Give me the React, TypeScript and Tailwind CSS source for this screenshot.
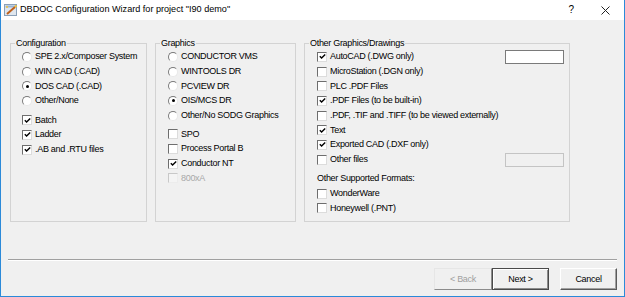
import React from "react";

type Item = { label: string; on?: boolean; disabled?: boolean };

function Radio({ label, on }: Item) {
  return (
    <div className="flex h-[14.67px] items-center">
      <span className="flex h-[10px] w-[10px] shrink-0 items-center justify-center rounded-full border border-t-[#7a7a7a] border-l-[#7a7a7a] border-b-[#e8e8e8] border-r-[#e8e8e8] bg-white">
        {on && <span className="h-[3px] w-[3px] rounded-full bg-black" />}
      </span>
      <span className="ml-[3px] whitespace-nowrap leading-none">{label}</span>
    </div>
  );
}

function Check({ label, on, disabled, children }: Item & { children?: React.ReactNode }) {
  return (
    <div className="flex h-[14.67px] items-center">
      <span
        className={
          disabled
            ? "flex h-[10px] w-[10px] shrink-0 items-center justify-center border border-t-[#c8c8c8] border-l-[#c8c8c8] border-b-[#ececec] border-r-[#ececec] bg-[#f4f4f4]"
            : "flex h-[10px] w-[10px] shrink-0 items-center justify-center border border-t-[#6e6e6e] border-l-[#6e6e6e] border-b-[#dcdcdc] border-r-[#dcdcdc] bg-white"
        }
      >
        {on && (
          <svg width="7" height="7" viewBox="0 0 7 7">
            <path d="M0.8 3.2 L2.6 5 L6.2 1.4" stroke="#000" strokeWidth="1.4" fill="none" />
          </svg>
        )}
      </span>
      <span className={disabled ? "ml-[3px] whitespace-nowrap leading-none text-[#a8a8a8]" : "ml-[3px] whitespace-nowrap leading-none"}>
        {label}
      </span>
      {children}
    </div>
  );
}

function Group({ title, width, pad, children }: { title: string; width: string; pad: string; children: React.ReactNode }) {
  return (
    <fieldset className={`h-[185px] shrink-0 border border-[#d3d3d3] ${width}`}>
      <legend className="ml-[4px] px-[1px] leading-[12px]">{title}</legend>
      <div className={`flex flex-col pt-[0.67px] ${pad}`}>{children}</div>
    </fieldset>
  );
}

function WizardIcon() {
  return (
    <svg width="14" height="14" viewBox="0 0 14 14">
      <rect x="0.5" y="1.5" width="12" height="11" fill="#dfe6ee" stroke="#8aa0b8" />
      <rect x="1.5" y="2.5" width="10" height="2" fill="#9bb6d6" />
      <path d="M3 11 L11 4" stroke="#c0601a" strokeWidth="2" />
      <path d="M11 4 L12.5 2.5" stroke="#f3c33a" strokeWidth="2" />
      <circle cx="3" cy="4" r="1" fill="#f3c33a" />
    </svg>
  );
}

export default function App() {
  return (
    <div className="flex h-[297px] w-[625px] flex-col overflow-hidden border-x border-b border-[#2b8ad9] bg-white font-['Liberation_Sans',Arial,sans-serif] text-black">
      {/* title bar */}
      <div className="flex h-[20px] shrink-0 items-center bg-white pl-[3px]">
        <WizardIcon />
        <span className="ml-[2px] text-[9.1px] leading-none">DBDOC Configuration Wizard for project "I90 demo"</span>
        <span className="ml-auto text-[10px] leading-none">?</span>
        <svg className="ml-[27px] mr-[14px]" width="9" height="9" viewBox="0 0 9 9">
          <path d="M0.5 0.5 L8.5 8.5 M8.5 0.5 L0.5 8.5" stroke="#222" strokeWidth="1" />
        </svg>
      </div>

      {/* body */}
      <div className="flex flex-1 flex-col bg-[#f0f0f0] text-[9px] tracking-[-0.3px]">
        <div className="flex gap-[8px] pl-[9px] pt-[17px]">
          <Group title="Configuration" width="w-[137px]" pad="pl-[11px]">
            <Radio label="SPE 2.x/Composer System" />
            <Radio label="WIN CAD (.CAD)" />
            <Radio label="DOS CAD (.CAD)" on />
            <Radio label="Other/None" />
            <div className="h-[4.67px]" />
            <Check label="Batch" on />
            <Check label="Ladder" on />
            <Check label=".AB and .RTU files" on />
          </Group>

          <Group title="Graphics" width="w-[141px]" pad="pl-[12px]">
            <Radio label="CONDUCTOR VMS" />
            <Radio label="WINTOOLS DR" />
            <Radio label="PCVIEW DR" />
            <Radio label="OIS/MCS DR" on />
            <Radio label="Other/No SODG Graphics" />
            <div className="h-[4px]" />
            <Check label="SPO" />
            <Check label="Process Portal B" />
            <Check label="Conductor NT" on />
            <Check label="800xA" disabled />
          </Group>

          <Group title="Other Graphics/Drawings" width="w-[266px]" pad="pl-[12px] pr-[5px]">
            <Check label="AutoCAD (.DWG only)" on>
              <span className="ml-auto h-[14px] w-[59px] border border-[#7a7a7a] bg-white" />
            </Check>
            <Check label="MicroStation (.DGN only)" />
            <Check label="PLC .PDF Files" />
            <Check label=".PDF Files (to be built-in)" on />
            <Check label=".PDF, .TIF and .TIFF (to be viewed externally)" />
            <Check label="Text" on />
            <Check label="Exported CAD (.DXF only)" on />
            <Check label="Other files">
              <span className="ml-auto h-[14px] w-[59px] border border-[#c4c4c4] bg-[#f0f0f0]" />
            </Check>
            <div className="h-[4.67px]" />
            <div className="flex h-[14.67px] items-center leading-none">Other Supported Formats:</div>
            <Check label="WonderWare" />
            <Check label="Honeywell (.PNT)" />
          </Group>
        </div>

        <div className="mx-[7px] mt-[37px] h-[2px] border-t border-b border-t-[#a0a0a0] border-b-white" />

        <div className="mt-[7px] flex justify-end pr-[7px]">
          <button className="h-[22px] w-[58px] border border-t-[#e6e6e6] border-l-[#e6e6e6] border-b-[#8c8c8c] border-r-[#8c8c8c] bg-[#f0f0f0] leading-none text-[#a0a0a0]">
            &lt; Back
          </button>
          <button className="h-[22px] w-[57px] border border-[#4a4a4a] bg-[#f0f0f0] leading-none shadow-[inset_1px_1px_0_#ffffff,inset_-1px_-1px_0_#8c8c8c]">
            Next &gt;
          </button>
          <button className="ml-[11px] h-[22px] w-[57px] border border-t-white border-l-white border-b-[#5a5a5a] border-r-[#5a5a5a] bg-[#f0f0f0] leading-none shadow-[inset_-1px_-1px_0_#a0a0a0]">
            Cancel
          </button>
        </div>
      </div>
    </div>
  );
}
